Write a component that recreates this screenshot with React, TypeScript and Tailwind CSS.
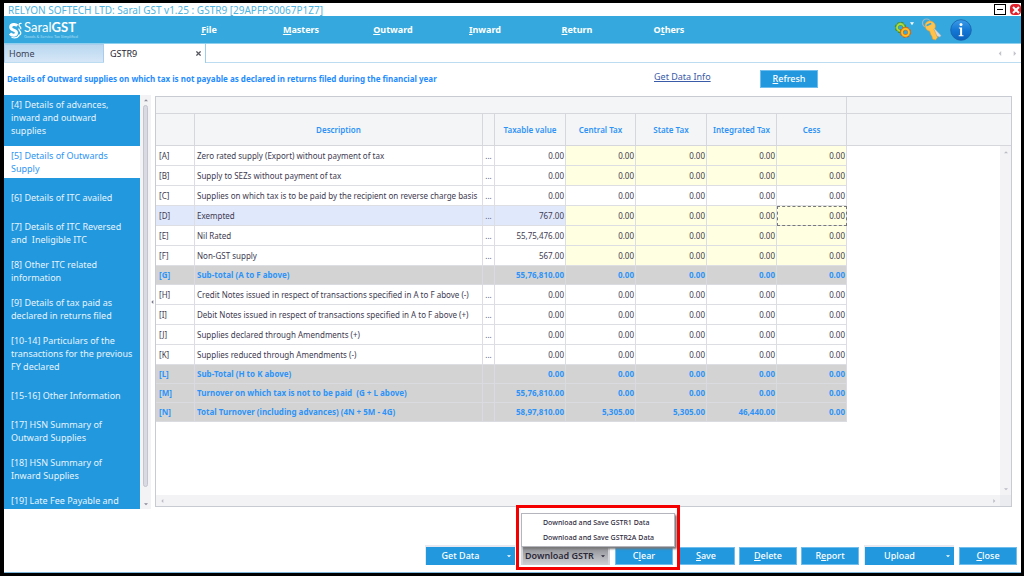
import type { ReactNode } from "react";

type Row = {
  id: string;
  label: string;
  values: string[];
  kind?: "input" | "summary";
};

const Z = "0.00";

const rows: Row[] = [
  { id: "[A]", label: "Zero rated supply (Export) without payment of tax", values: [Z, Z, Z, Z, Z], kind: "input" },
  { id: "[B]", label: "Supply to SEZs without payment of tax", values: [Z, Z, Z, Z, Z], kind: "input" },
  { id: "[C]", label: "Supplies on which tax is to be paid by the recipient on reverse charge basis", values: [Z, Z, Z, Z, Z] },
  { id: "[D]", label: "Exempted", values: ["767.00", Z, Z, Z, Z], kind: "input" },
  { id: "[E]", label: "Nil Rated", values: ["55,75,476.00", Z, Z, Z, Z], kind: "input" },
  { id: "[F]", label: "Non-GST supply", values: ["567.00", Z, Z, Z, Z], kind: "input" },
  { id: "[G]", label: "Sub-total (A to F above)", values: ["55,76,810.00", Z, Z, Z, Z], kind: "summary" },
  { id: "[H]", label: "Credit Notes issued in respect of transactions specified in A to F above (-)", values: [Z, Z, Z, Z, Z] },
  { id: "[I]", label: "Debit Notes issued in respect of transactions specified in A to F above (+)", values: [Z, Z, Z, Z, Z] },
  { id: "[J]", label: "Supplies declared through Amendments (+)", values: [Z, Z, Z, Z, Z] },
  { id: "[K]", label: "Supplies reduced through Amendments (-)", values: [Z, Z, Z, Z, Z] },
  { id: "[L]", label: "Sub-Total (H to K above)", values: [Z, Z, Z, Z, Z], kind: "summary" },
  { id: "[M]", label: "Turnover on which tax is not to be paid  (G + L above)", values: ["55,76,810.00", Z, Z, Z, Z], kind: "summary" },
  { id: "[N]", label: "Total Turnover (including advances) (4N + 5M - 4G)", values: ["58,97,810.00", "5,305.00", "5,305.00", "46,440.00", Z], kind: "summary" },
];

const sections: string[][] = [
  ["[4] Details of advances,", "inward and outward", "supplies"],
  ["[5] Details of Outwards", "Supply"],
  ["[6] Details of ITC availed"],
  ["[7] Details of ITC Reversed", "and  Ineligible ITC"],
  ["[8] Other ITC related", "information"],
  ["[9] Details of tax paid as", "declared in returns filed"],
  ["[10-14] Particulars of the", "transactions for the previous", "FY declared"],
  ["[15-16] Other Information"],
  ["[17] HSN Summary of", "Outward Supplies"],
  ["[18] HSN Summary of", "Inward Supplies"],
  ["[19] Late Fee Payable and"],
];

function Key({ text, at = 0 }: { text: string; at?: number }) {
  return (
    <span>
      {text.slice(0, at)}
      <u className="underline-offset-1">{text[at]}</u>
      {text.slice(at + 1)}
    </span>
  );
}

function Arrow({ dir, className }: { dir: "up" | "down" | "left" | "right"; className: string }) {
  const d = {
    up: "M0 5 3 2l3 3z",
    down: "M0 2h6L3 5z",
    left: "M5 0v6L2 3z",
    right: "M2 0v6l3-3z",
  }[dir];
  return (
    <svg viewBox="0 0 6 6" className={className} fill="currentColor" aria-hidden="true">
      <path d={d} />
    </svg>
  );
}

function Push({ children }: { children: ReactNode }) {
  return (
    <button className="h-[18px] w-[58px] border border-[#6fbdec] bg-[#2298de] text-center text-[9px] leading-4 font-medium text-white">
      {children}
    </button>
  );
}

function Split({ children }: { children: ReactNode }) {
  return (
    <button className="mx-px flex h-5 w-[90px] items-center border-t-2 border-l border-[#e8e8f0] bg-[#2298de] pr-1 text-[9px] leading-4 font-medium text-white">
      <span className="flex-1 pr-3 text-center">{children}</span>
      <Arrow dir="down" className="size-1" />
    </button>
  );
}

function Logo() {
  return (
    <div className="flex w-[196px] items-center gap-px pl-[5px] font-['Lato','Noto_Sans',sans-serif] text-white">
      <svg viewBox="0 0 14 18" className="h-[18px] w-[14px]" fill="none" stroke="currentColor" aria-hidden="true">
        <path d="M8.300 4.600C6.500 2.800 1.700 3 1.700 6.200c0 3.600 5.800 2.300 5.800 5.600 0 3-4.500 3-6.500.8" strokeWidth="3" />
        <path d="M12.600 2.600c-1.800-1-3.400.8-2.200 2.400.9 1.200 2 1.600 1.300 3.200M10 7.500c-.8 2 1.900 2.600 1.800 4.600-.1 1.500-1.400 2.400-2.800 2.300" strokeWidth="1.200" />
        <path d="M2.500 16.200c3 1.200 6 .4 7.600-1.600" strokeWidth="1.200" />
      </svg>
      <div className="flex flex-col whitespace-nowrap">
        <span className="text-[13px] leading-[13px] font-normal">
          Saral<b className="font-bold">GST</b>
        </span>
        <span className="text-[4px] leading-[5px] text-[#a9dcf3]">Goods &amp; Service Tax Simplified</span>
      </div>
    </div>
  );
}

function Gears() {
  return (
    <svg viewBox="0 0 20 18" className="h-[18px] w-5" fill="none" aria-hidden="true">
      <circle cx="6.500" cy="6.500" r="4.300" stroke="#4f8a1a" strokeWidth="2.800" strokeDasharray="2 1.380" />
      <circle cx="6.500" cy="6.500" r="3.500" stroke="#5f9a20" strokeWidth="3" />
      <circle cx="6.500" cy="6.500" r="3.500" stroke="#a9dc45" strokeWidth="1.800" />
      <circle cx="11.500" cy="11.300" r="4.300" stroke="#c9601a" strokeWidth="2.800" strokeDasharray="2 1.380" />
      <circle cx="11.500" cy="11.300" r="3.500" stroke="#e0731c" strokeWidth="3" />
      <circle cx="11.500" cy="11.300" r="3.500" stroke="#ffc021" strokeWidth="1.800" />
      <path d="M16 1.300h4l-2 2.900z" fill="#fff" />
    </svg>
  );
}

function Keys() {
  return (
    <svg viewBox="0 0 22 23" className="h-[23px] w-[22px]" fill="none" aria-hidden="true">
      <circle cx="5.500" cy="5" r="4" stroke="#9fb6c4" strokeWidth="1.200" />
      <path d="m12 9 8 8.500-1 1.500-2.500-.5-6-6.500z" fill="#d5dade" stroke="#9aa7b0" strokeWidth=".5" />
      <path d="M4.500 9.500C2.500 4.500 8 1.500 12 4c3 2 3 5.500 1 7.500l3.500 8-2 2.500-3-1-.5-2.500-1-1.500-1.500-4C7 13 5 11.500 4.500 9.500z" fill="#ffc24a" stroke="#e29a2c" strokeWidth=".6" />
      <path d="m6.300 7.300 3.200-1.500" stroke="#35a9dd" strokeWidth="1.800" strokeLinecap="round" />
    </svg>
  );
}

function Info() {
  return (
    <svg viewBox="0 0 22 22" className="size-[22px]" aria-hidden="true">
      <defs>
        <linearGradient id="info-fill" x1="0" y1="0" x2="0" y2="1">
          <stop offset="0" stopColor="#3c9be8" />
          <stop offset=".5" stopColor="#1478d4" />
          <stop offset="1" stopColor="#0b62c0" />
        </linearGradient>
      </defs>
      <circle cx="11" cy="11" r="10.300" fill="url(#info-fill)" stroke="#1a5fa8" strokeWidth=".8" />
      <circle cx="11" cy="5.500" r="1.500" fill="#fff" />
      <path d="M8.900 8.600h3.200v7.600h1.400v1H8.700v-1h1.400V9.600H8.900z" fill="#fff" />
    </svg>
  );
}

function MenuBar() {
  const items: [string, number][] = [
    ["File", 0],
    ["Masters", 0],
    ["Outward", 0],
    ["Inward", 0],
    ["Return", 0],
    ["Others", 1],
  ];
  return (
    <div className="flex h-7 shrink-0 items-center border-b border-[#8fd0ee] bg-[#35a9dd]">
      <Logo />
      <nav className="-ml-[37px] flex text-[9px] leading-4 font-bold text-white">
        {items.map(([text, at]) => (
          <button key={text} className="w-[92px]">
            <Key text={text} at={at} />
          </button>
        ))}
      </nav>
      <div className="ml-auto flex items-center gap-[7px] pr-[49px]">
        <button aria-label="Settings"><Gears /></button>
        <button aria-label="Password"><Keys /></button>
        <button aria-label="Information"><Info /></button>
      </div>
    </div>
  );
}

function Sidebar() {
  return (
    <aside className="flex shrink-0">
      <nav className="w-[136px] overflow-hidden bg-[#2298de] text-[9px] leading-[13px] text-[#e6f4fd]">
        <div className="-mt-[3px]">
          {sections.map((lines, i) => (
            <button
              key={lines[0]}
              className={
                "flex w-full flex-col justify-center py-[3px] text-left whitespace-pre " +
                (i === 1 ? "text-[#2d95f5] " : "") +
                (i === sections.length - 1 ? "min-h-[25px]" : "min-h-[33px]")
              }
            >
              <span className={"w-full py-[3px] pl-[7px] " + (i === 1 ? "bg-white" : "")}>{lines.join("\n")}</span>
            </button>
          ))}
        </div>
      </nav>
      <div className="flex w-[11px] flex-col items-center bg-[#f3f3f6] py-[3px] text-[#8a8a98]">
        <Arrow dir="up" className="size-1" />
        <div className="my-[3px] w-[5px] flex-1 rounded-full border border-[#c2c4ce] bg-[#d9dae2]" />
        <Arrow dir="down" className="mt-3 size-1" />
      </div>
      <div className="flex w-1 items-center text-[#77778a]">
        <Arrow dir="left" className="-ml-px size-1" />
      </div>
    </aside>
  );
}

function Grid() {
  const head = "border-r border-b border-[#d5d7dd] p-0 text-center font-semibold";
  return (
    <section className="mt-px mb-[2px] grid min-w-0 flex-1 grid-cols-[minmax(0,1fr)_11px] grid-rows-[49px_minmax(0,1fr)_11px] border border-[#c9cbd3] bg-white">
      <div className="col-start-1 row-span-2 row-start-1 overflow-hidden">
        <table className="w-full table-fixed border-separate border-spacing-0 text-[8px] leading-3 text-[#3e3a50]">
          <colgroup>
            <col className="w-[39px]" />
            <col className="w-[288px]" />
            <col className="w-[12px]" />
            <col className="w-[71px]" />
            <col className="w-[70px]" />
            <col className="w-[71px]" />
            <col className="w-[70px]" />
            <col className="w-[70px]" />
            <col />
          </colgroup>
          <thead className="bg-[#f4f5f7] text-[#2d93f7]">
            <tr className="h-[17px]">
              <td colSpan={8} className="border-r border-b border-[#d5d7dd] p-0" />
              <td className="border-b border-[#d5d7dd] p-0" />
            </tr>
            <tr className="h-8">
              <th className={head} />
              <th className={head}>Description</th>
              <th className={head} />
              <th className={head}>Taxable value</th>
              <th className={head}>Central Tax</th>
              <th className={head}>State Tax</th>
              <th className={head}>Integrated Tax</th>
              <th className={head}>Cess</th>
              <td className="border-b border-[#d5d7dd] p-0" />
            </tr>
          </thead>
          <tbody>
            {rows.map((row) => {
              const sum = row.kind === "summary";
              const selected = row.id === "[D]";
              const line = sum ? "border-[#dadbe0]" : "border-[#dcdee4]";
              const base = sum ? "bg-[#d3d3d3]" : selected ? "bg-[#e0e8fc]" : "bg-white";
              const cell = "border-r border-b py-0 whitespace-pre " + line + " ";
              return (
                <tr key={row.id} className={sum ? "h-[19px] font-bold text-[#2d93f7]" : "h-5"}>
                  <td className={cell + base + " pr-0 pl-[3px]"}>{row.id}</td>
                  <td className={cell + base + " pr-0 pl-[2px]"}>{row.label}</td>
                  <td className={cell + base + " px-0 text-center text-[#55587a]"}>
                    {!sum && <button aria-label={"Details for " + row.id}>...</button>}
                  </td>
                  {row.values.map((value, c) => {
                    const fill = row.kind === "input" && c > 0 ? "bg-[#ffffe1]" : base;
                    const focus = selected && c === 4 ? " outline-1 -outline-offset-1 outline-dashed outline-[#777]" : "";
                    return (
                      <td key={c} className={cell + fill + " pr-px pl-0 text-right" + focus}>
                        {value}
                      </td>
                    );
                  })}
                  <td className="p-0" />
                </tr>
              );
            })}
          </tbody>
        </table>
      </div>
      <div className="flex flex-col bg-[#f4f5f7]">
        <div className="h-[17px] border-b border-[#d5d7dd]" />
        <div className="flex-1 border-b border-[#d5d7dd]" />
      </div>
      <div className="col-start-2 flex flex-col items-center justify-between bg-[#f3f3f6] py-1 text-[#b9bac4]">
        <Arrow dir="up" className="size-1" />
        <Arrow dir="down" className="size-1" />
      </div>
      <div className="col-start-1 flex items-center justify-between bg-[#f3f3f6] px-1 text-[#b9bac4]">
        <Arrow dir="left" className="size-1" />
        <Arrow dir="right" className="size-1" />
      </div>
      <div className="bg-[#ebecf0]" />
    </section>
  );
}

function DownloadMenu() {
  return (
    <div className="relative mx-px">
      <button className="flex h-[18px] w-[89px] items-center justify-between border-x-2 border-[#d4d5da] bg-linear-to-b from-[#8f9096] to-[#cfd0d4] pr-[3px] pl-[2px] text-[9px] leading-4 font-semibold text-[#2b2838]">
        <span className="whitespace-nowrap">Download GSTR</span>
        <Arrow dir="down" className="size-1" />
      </button>
      <div
        role="menu"
        className="absolute bottom-[18px] left-0 z-10 flex w-[154px] flex-col border border-[#b5b6bd] bg-white py-px text-[7px] leading-[15px] text-[#2f2b3d] shadow-[2px_2px_2px_#777]"
      >
        <button role="menuitem" className="pl-[21px] text-left font-medium">Download and Save GSTR1 Data</button>
        <button role="menuitem" className="pl-[21px] text-left font-medium">Download and Save GSTR2A Data</button>
      </div>
      <div className="pointer-events-none absolute -bottom-[5px] -left-[5px] z-20 h-[65px] w-[164px] border-[3px] border-[#f50000]" />
    </div>
  );
}

export default function App() {
  return (
    <div className="flex h-screen flex-col overflow-hidden border-[3px] border-l-4 border-black bg-white font-['Noto_Sans','Open_Sans',sans-serif]">
      <header className="flex h-[13px] shrink-0 items-center justify-between pl-1 text-[#4fb3e0]">
        <h1 className="text-[10px] leading-3">RELYON SOFTECH LTD: Saral GST v1.25 : GSTR9 [29APFPS0067P1Z7]</h1>
        <div className="flex gap-1">
          <button aria-label="Minimize" className="flex h-[11px] w-3 items-center justify-center border border-black bg-white">
            <span className="h-px w-[6px] bg-black" />
          </button>
          <button aria-label="Close window" className="flex h-[11px] w-[11px] items-center justify-center rounded-sm bg-[#e2202c]">
            <svg viewBox="0 0 8 8" className="size-2" stroke="#fff" strokeWidth="2" aria-hidden="true">
              <path d="m1 1 6 6M7 1 1 7" />
            </svg>
          </button>
        </div>
      </header>
      <MenuBar />
      <div className="flex h-[19px] shrink-0 items-stretch border-b border-[#bcdcf2] text-[9px] leading-4">
        <button className="w-[100px] border border-b-0 border-[#a9cdea] bg-linear-to-b from-[#b9d7ef] to-[#d6e7f7] pl-1 text-left text-[#3c4254]">
          Home
        </button>
        <div className="-mb-px flex w-[102px] items-center justify-between border-r border-[#9fcdec] bg-white pr-1 pl-[6px] text-[#25222f]">
          <span>GSTR9</span>
          <button aria-label="Close tab">
            <svg viewBox="0 0 6 6" className="size-[5px]" stroke="#55555f" strokeWidth="1.500" aria-hidden="true">
              <path d="m.5.5 5 5M5.500.5l-5 5" />
            </svg>
          </button>
        </div>
        <div className="ml-auto flex items-center gap-[10px] pr-1 text-[#c4c4cc]">
          <Arrow dir="left" className="size-[5px]" />
          <Arrow dir="right" className="size-[5px]" />
        </div>
      </div>
      <div className="flex h-8 shrink-0 items-center pl-[3px]">
        <h2 className="w-[647px] text-[8px] leading-3 font-bold text-[#1e8cff]">
          Details of Outward supplies on which tax is not payable as declared in returns filed during the financial year
        </h2>
        <a href="#info" className="w-[106px] pb-1 text-[9px] leading-4 text-[#3a5ba8] underline underline-offset-1">
          Get Data Info
        </a>
        <Push>
          <Key text="Refresh" />
        </Push>
      </div>
      <main className="flex min-h-0 flex-1 pr-[9px]">
        <Sidebar />
        <Grid />
      </main>
      <footer className="flex h-[64px] shrink-0 items-end justify-end gap-1 border-b border-[#7fb6dc] pr-1 pb-[7px]">
        <Split>Get Data</Split>
        <DownloadMenu />
        <Push><Key text="Clear" at={1} /></Push>
        <Push><Key text="Save" /></Push>
        <Push><Key text="Delete" /></Push>
        <Push><Key text="Report" at={1} /></Push>
        <Split>Upload</Split>
        <Push><Key text="Close" /></Push>
      </footer>
    </div>
  );
}
